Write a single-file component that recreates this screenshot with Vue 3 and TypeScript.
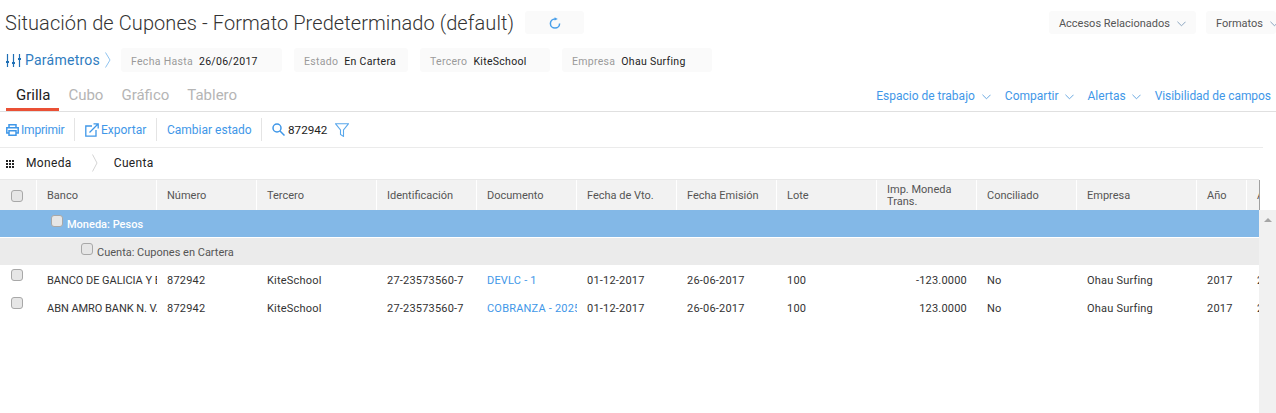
<template>
  <div class="page">
    <header class="title-row">
      <h1 class="title">Situación de Cupones - Formato Predeterminado (default)</h1>
      <button class="refresh">
        <svg width="12" height="12" viewBox="0 0 12 12" fill="none" stroke="#4aa0ea" stroke-width="1.5">
          <path d="M10.6 6.500A4.600 4.600 0 1 1 6 1.900" />
          <path d="M5.600.2 8.800 1.900 5.600 3.600z" fill="#4aa0ea" stroke="none" />
        </svg>
      </button>
      <div class="title-actions">
        <button class="grey-btn">Accesos Relacionados <svg class="chev" viewBox="0 0 10 6"><path d="M.5.5 5 5 9.5.5" /></svg></button>
        <button class="grey-btn grey-btn--cut">Formatos <svg class="chev" viewBox="0 0 10 6"><path d="M.5.5 5 5 9.5.5" /></svg></button>
      </div>
    </header>

    <div class="params-row">
      <div class="params-link">
        <svg width="15" height="15" viewBox="0 0 15 15" fill="none" stroke="#1f6fb5" stroke-width="1.200">
          <path d="M1.500 1v13M7.500 1v13M13.500 1v13" />
          <path d="M0 9h3M6 10h3M12 6h3" stroke-width="2" />
        </svg>
        <span>Parámetros</span>
        <svg width="6" height="16" viewBox="0 0 6 16" fill="none" stroke="#8fc3ef"><path d="M.5 .5 5 8 .5 15.500" /></svg>
      </div>
      <div v-for="p in params" :key="p.label" class="param" :style="{ width: p.width + 'px' }">
        <span class="param-label">{{ p.label }}</span>
        <span class="param-value">{{ p.value }}</span>
      </div>
    </div>

    <nav class="tabs-row">
      <div class="tabs">
        <span v-for="(tab, i) in tabs" :key="tab" class="tab" :class="{ 'tab--active': i === 0 }">{{ tab }}</span>
      </div>
      <div class="tab-actions">
        <span v-for="a in tabActions" :key="a" class="tab-action">{{ a }} <svg class="chev chev--blue" viewBox="0 0 10 6"><path d="M.5.5 5 5 9.5.5" /></svg></span>
        <span class="tab-action tab-action--plain">Visibilidad de campos</span>
      </div>
    </nav>

    <div class="toolbar">
      <span class="tool tool--print">
        <svg width="13" height="12" viewBox="0 0 13 12" fill="none" stroke="#3f97e8" stroke-width="1.500">
          <path d="M3 4V.8h7V4M3 9H.8V3.800h11.400V9H10" />
          <path d="M3 6.800h7v4.400H3z" />
        </svg>
        Imprimir
      </span>
      <span class="tool tool--export">
        <svg width="14" height="14" viewBox="0 0 14 14" fill="none" stroke="#3f97e8" stroke-width="1.300">
          <path d="M7 3H.8v10.200H11V7" />
          <path d="M4.500 9.500 13 1M8.500.8h4.700v4.700" />
        </svg>
        Exportar
      </span>
      <span class="tool tool--state">Cambiar estado</span>
      <span class="search">
        <svg width="13" height="13" viewBox="0 0 13 13" fill="none" stroke="#3f97e8" stroke-width="1.500">
          <circle cx="5" cy="5" r="4" /><path d="M8 8 12.500 12.500" />
        </svg>
        <span class="search-value">872942</span>
        <svg class="funnel" width="14" height="14" viewBox="0 0 14 14" fill="none" stroke="#5aa8ec" stroke-width="1.100">
          <path d="M.6.8h12.800L8.500 7v6.400L5.500 11.400V7z" />
        </svg>
      </span>
    </div>

    <div class="group-row">
      <span class="group-dots"><i v-for="n in 9" :key="n"></i></span>
      <span class="group-name">Moneda</span>
      <svg width="6" height="18" viewBox="0 0 6 18" fill="none" stroke="#d4d4d4"><path d="M.5 .5 5 9 .5 17.500" /></svg>
      <span class="group-name group-name--second">Cuenta</span>
    </div>

    <div class="grid-wrap">
      <div class="grid">
        <div class="grid-head">
          <div class="head-cell head-cell--check"><span class="check"></span></div>
          <div v-for="c in columns" :key="c" class="head-cell">{{ c }}</div>
          <div class="head-cell head-cell--cut">A</div>
        </div>
        <div class="band band--blue"><span class="check check--band"></span><span>Moneda: Pesos</span></div>
        <div class="band band--grey"><span class="check check--band"></span><span>Cuenta: Cupones en Cartera</span></div>
        <div v-for="(row, i) in rows" :key="i" class="grid-row">
          <div class="cell cell--check"><span class="check"></span></div>
          <div v-for="(val, j) in row" :key="j" class="cell" :class="{ 'cell--bank': j === 0, 'cell--link': j === 4, 'cell--num': j === 8 }">{{ val }}</div>
          <div class="cell cell--last">2</div>
        </div>
      </div>
      <div class="scrollbar"><span class="scroll-up"></span></div>
    </div>
  </div>
</template>

<script setup lang="ts">
const params = [
  { label: 'Fecha Hasta', value: '26/06/2017', width: 161 },
  { label: 'Estado', value: 'En Cartera', width: 114 },
  { label: 'Tercero', value: 'KiteSchool', width: 130 },
  { label: 'Empresa', value: 'Ohau Surfing', width: 150 },
]

const tabs = ['Grilla', 'Cubo', 'Gráfico', 'Tablero']
const tabActions = ['Espacio de trabajo', 'Compartir', 'Alertas']

const columns = [
  'Banco', 'Número', 'Tercero', 'Identificación', 'Documento', 'Fecha de Vto.',
  'Fecha Emisión', 'Lote', 'Imp. Moneda Trans.', 'Conciliado', 'Empresa', 'Año',
]

const rows = [
  ['BANCO DE GALICIA Y B', '872942', 'KiteSchool', '27-23573560-7', 'DEVLC - 1', '01-12-2017', '26-06-2017', '100', '-123.0000', 'No', 'Ohau Surfing', '2017'],
  ['ABN AMRO BANK N. V.', '872942', 'KiteSchool', '27-23573560-7', 'COBRANZA - 2025', '01-12-2017', '26-06-2017', '100', '123.0000', 'No', 'Ohau Surfing', '2017'],
]
</script>

<style>
html, body {
  background: #fff;
  overflow: hidden;
}
</style>

<style scoped>
.page {
  width: 1276px;
  height: 413px;
  overflow: hidden;
  font-family: Roboto, "Liberation Sans", sans-serif;
  font-size: 11px;
  color: #333;
}

button {
  font-family: inherit;
  border: 0;
  cursor: pointer;
}

svg {
  flex-shrink: 0;
}

/* title */
.title-row {
  height: 46px;
  padding-top: 11px;
  padding-left: 5px;
  box-sizing: border-box;
  display: flex;
  align-items: flex-start;
}

.title {
  margin: 0;
  font-size: 20px;
  line-height: 24px;
  font-weight: 300;
  color: #333;
  letter-spacing: 0.08px;
  white-space: nowrap;
}

.refresh {
  margin-left: 11px;
  width: 59px;
  height: 23px;
  background: #fafafa;
  border-radius: 3px;
  display: flex;
  align-items: center;
  justify-content: center;
  padding: 0;
}

.title-actions {
  margin-left: auto;
  display: flex;
  gap: 10px;
}

.grey-btn {
  height: 23px;
  background: #fafafa;
  border-radius: 3px;
  padding: 2px 10px 0;
  font-size: 11px;
  color: #555;
  display: flex;
  align-items: center;
  gap: 7px;
  white-space: nowrap;
}

.grey-btn--cut {
  width: 70px;
  padding-right: 0;
}

.chev {
  width: 9px;
  height: 6px;
  fill: none;
  stroke: #7e9bb8;
  stroke-width: 1;
}

.chev--blue {
  stroke: #5a9fde;
  margin-left: 3px;
}

/* params */
.params-row {
  height: 24px;
  padding-left: 6px;
  display: flex;
  align-items: center;
  margin-top: 2px;
}

.params-link {
  width: 115px;
  display: flex;
  align-items: center;
  gap: 4px;
  font-size: 14px;
  letter-spacing: 0.25px;
  color: #2f7cc0;
}

.params-link svg:last-child {
  margin-left: 1px;
}

.param {
  height: 24px;
  box-sizing: border-box;
  background: #fafafa;
  border-radius: 3px;
  padding: 2px 10px 0;
  margin-right: 12px;
  display: flex;
  align-items: center;
  gap: 6px;
  white-space: nowrap;
  font-size: 10.5px;
  letter-spacing: 0.3px;
  overflow: hidden;
}

.param-label {
  color: #9a9a9a;
}

.param-value {
  color: #222;
}

/* tabs */
.tabs-row {
  margin-top: 12px;
  height: 27px;
  border-bottom: 1px solid #e0e0e0;
  display: flex;
  justify-content: space-between;
}

.tabs {
  display: flex;
  padding-left: 6px;
}

.tab {
  font-size: 15px;
  color: #b5b5b5;
  line-height: 23px;
  padding: 0 9px;
  height: 24px;
  white-space: nowrap;
}

.tab--active {
  color: #222;
  padding-left: 10px;
  border-bottom: 3px solid #ea5035;
}

.tab-actions {
  display: flex;
  align-items: flex-start;
  gap: 14px;
  padding-right: 5px;
  font-size: 12px;
  line-height: 24px;
  color: #3f97e8;
}

.tab-action {
  white-space: nowrap;
}

.tab-action:first-child .chev {
  margin-left: 4px;
}

.tab-action--plain {
  letter-spacing: -0.05px;
}

/* toolbar */
.toolbar {
  height: 35px;
  border-bottom: 1px solid #ebebeb;
  margin-right: 13px;
  display: flex;
  align-items: center;
  font-size: 12px;
  color: #3f97e8;
}

.tool {
  display: flex;
  align-items: center;
  gap: 2px;
  height: 23px;
  white-space: nowrap;
  border-right: 1px solid #e4e4e4;
}

.tool--print {
  padding-left: 6px;
  width: 68px;
  letter-spacing: -0.2px;
}

.tool--export {
  padding-left: 10px;
  width: 71px;
}

.tool--state {
  padding-left: 10px;
  width: 94px;
}

.search {
  display: flex;
  align-items: center;
  padding-left: 10px;
  gap: 3px;
}

.search-value {
  color: #222;
  font-size: 11.7px;
}

.funnel {
  margin-left: 5px;
}

/* group by */
.group-row {
  height: 31px;
  padding: 0 0 2px 6px;
  box-sizing: border-box;
  display: flex;
  align-items: center;
  font-size: 12px;
  color: #222;
  letter-spacing: 0.35px;
}

.group-dots {
  width: 8px;
  display: grid;
  grid-template-columns: repeat(3, 2px);
  gap: 1px;
  margin-right: 12px;
  margin-top: 2px;
}

.group-dots i {
  width: 2px;
  height: 2px;
  background: #222;
}

.group-name {
  margin-right: 20px;
}

.group-name--second {
  margin-left: 16px;
}

/* grid */
.grid-wrap {
  position: relative;
}

.grid {
  width: 1259px;
  overflow: hidden;
}

.grid-head,
.grid-row {
  display: grid;
  grid-template-columns: 37px 120px 100px 120px 100px 100px 100px 100px 100px 100px 100px 120px 50px 12px;
}

.grid-head {
  height: 31px;
  background: #f2f2f2;
  border-top: 1px solid #e8e8e8;
  box-sizing: border-box;
  color: #555;
}

.head-cell {
  display: flex;
  align-items: center;
  padding: 2px 10px 0;
  border-right: 1px solid #fff;
  line-height: 12px;
  overflow: hidden;
}

.head-cell--check {
  padding-left: 11px;
}

.head-cell--cut {
  border-right: 0;
  white-space: nowrap;
  padding: 2px 0 0 10px;
}

.check {
  width: 10px;
  height: 10px;
  flex-shrink: 0;
  display: block;
  background: #e6e6e6;
  border: 1px solid #a8a8a8;
  border-radius: 3px;
}

.band {
  display: flex;
  align-items: center;
  height: 27px;
  box-sizing: border-box;
  padding-top: 2px;
}

.band--blue {
  background: #83b8e7;
  color: #fff;
  font-weight: 500;
  padding-left: 51px;
  margin-bottom: 1px;
}

.band--grey {
  background: #ebebeb;
  color: #555;
  padding-left: 81px;
}

.check--band {
  margin-right: 4px;
  margin-top: -8px;
}

.grid-row {
  height: 28px;
  align-items: center;
}

.cell {
  padding-left: 10px;
  white-space: nowrap;
  overflow: hidden;
  color: #333;
  letter-spacing: 0.2px;
  line-height: 32px;
  height: 28px;
}

.cell--bank {
  letter-spacing: -0.05px;
}

.cell--check {
  padding-left: 11px;
}

.cell--check .check {
  margin-top: 4px;
}

.cell--link {
  color: #3f97e8;
}

.cell--num {
  text-align: right;
  padding-right: 10px;
}

.cell--last {
  padding-left: 10px;
}

.scrollbar {
  position: absolute;
  right: 0;
  top: 31px;
  width: 17px;
  height: 203px;
  background: #f1f1f1;
}

.scrollbar::before {
  content: '';
  position: absolute;
  left: 0;
  top: -30px;
  width: 1px;
  height: 30px;
  background: #a0a0a0;
}

.scroll-up {
  position: absolute;
  left: 5px;
  top: 8px;
  border-left: 4px solid transparent;
  border-right: 4px solid transparent;
  border-bottom: 4px solid #a6a6a6;
}
</style>
